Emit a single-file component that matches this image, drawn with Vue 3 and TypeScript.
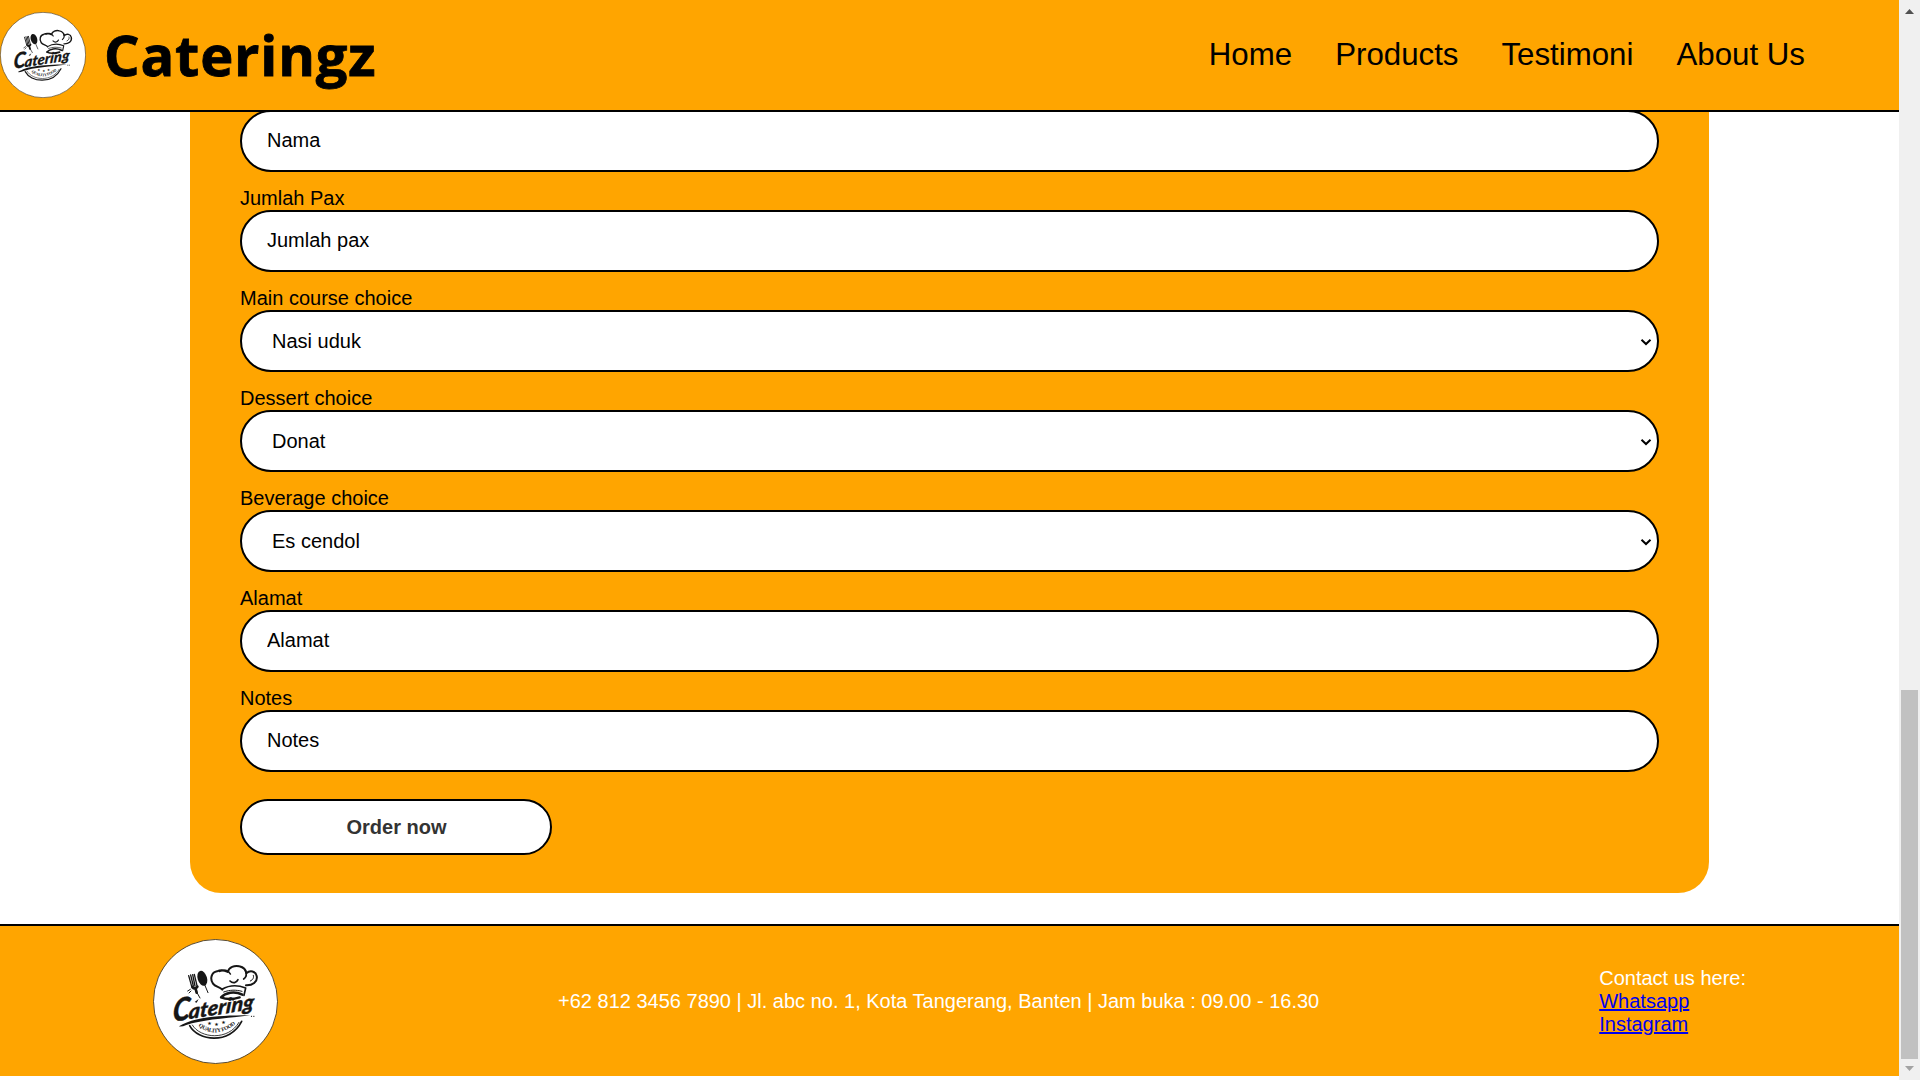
<script setup lang="ts">
interface Field {
  label: string
  kind: 'text' | 'select'
  value: string
}

const links: string[] = ['Home', 'Products', 'Testimoni', 'About Us']

const fields: Field[] = [
  { label: '', kind: 'text', value: 'Nama' },
  { label: 'Jumlah Pax', kind: 'text', value: 'Jumlah pax' },
  { label: 'Main course choice', kind: 'select', value: 'Nasi uduk' },
  { label: 'Dessert choice', kind: 'select', value: 'Donat' },
  { label: 'Beverage choice', kind: 'select', value: 'Es cendol' },
  { label: 'Alamat', kind: 'text', value: 'Alamat' },
  { label: 'Notes', kind: 'text', value: 'Notes' },
]
</script>

<template>
  <div class="window">
    <div class="page">
      <header class="header">
        <svg class="logo" viewBox="39 87 375 375">
          <symbol id="badge" viewBox="39 87 375 375">
            <circle cx="226.500" cy="274.500" r="186" fill="#fff" stroke="#3a3020" stroke-width="2.500" />
            <g fill="none" stroke="#161616" stroke-linecap="round" stroke-linejoin="round">
              <path stroke-width="6" d="M247 239C238 230 226 231 219 221C209 207 214 187 231 184C242 179 254 181 263 186C267 172 283 165 298 169C311 172 318 181 319 190C330 180 347 183 350 198C354 216 337 227 318 226" />
              <path stroke-width="5" d="M246 238C266 226 292 224 317 234L312 256M239 184C252 178 265 180 271 192M316 181C321 192 318 202 311 207M270 213C279 222 290 218 294 209" />
              <path stroke-width="7" d="M307 254C283 242 256 248 243 262C262 270 286 266 299 262" />
              <path stroke-width="3" d="M251 246C271 239 287 239 306 244M331 213C340 209 342 202 340 196" />
              <path stroke-width="4" d="M146 197L155 229M152 195L160 228M158 194L165 228M163 193L171 227" />
              <path stroke-width="8" d="M157 231Q165 240 172 230M167 237L170 248" />
              <path stroke-width="3" d="M171 248L180 264M193 222L204 248M143 243L151 238M147 249L153 243" />
              <path stroke-width="5" d="M149 347C173 393 269 405 305 334" />
              <path stroke-width="2.500" d="M157 345C181 386 265 393 297 337" />
              <path stroke-width="3" d="M334 319H335M341 319H342" />
            </g>
            <ellipse cx="187" cy="205" rx="14" ry="23" transform="rotate(-17 187 205)" fill="#161616" />
            <path d="M117 349C155 325 215 316 331 316C260 325 184 329 139 345Q125 351 117 349Z" fill="#161616" />
            <path d="M164 276L176 267L170 278ZM265 267L287 265L280 272Z" fill="#161616" />
            <text class="script" font-size="94" textLength="52" lengthAdjust="spacingAndGlyphs" transform="translate(97 335) rotate(-8) skewX(-12)">C</text>
            <text class="script" font-size="62" textLength="198" lengthAdjust="spacingAndGlyphs" transform="translate(145 328) rotate(-9) skewX(-14)">atering</text>
            <path id="badge-arc" d="M175 348Q228 389 287 342" fill="none" />
            <text class="tagline"><textPath href="#badge-arc" textLength="122">QUALITY FOOD</textPath></text>
            <g class="stars"><text x="202" y="346">★</text><text x="223" y="349">★</text><text x="244" y="343">★</text></g>
          </symbol>
          <use href="#badge" x="39" y="87" width="375" height="375" />
        </svg>
        <h1 class="brand">Cateringz</h1>
        <nav class="nav">
          <a v-for="link in links" :key="link" class="nav-link">{{ link }}</a>
        </nav>
      </header>

      <main class="main">
        <form class="card">
          <div v-for="field in fields" :key="field.value" class="field">
            <label v-if="field.label" class="label">{{ field.label }}</label>
            <input v-if="field.kind === 'text'" class="control" type="text" :placeholder="field.value" />
            <div v-else class="select-wrap">
              <select class="control select">
                <option>{{ field.value }}</option>
              </select>
              <svg class="chevron" viewBox="0 0 12 8"><path d="M1.500 1.700L6 6L10.500 1.700" /></svg>
            </div>
          </div>
          <button class="order" type="button">Order now</button>
        </form>
      </main>

      <footer class="footer">
        <svg class="footer-logo" viewBox="39 87 375 375">
          <use href="#badge" x="39" y="87" width="375" height="375" />
        </svg>
        <p class="info">+62 812 3456 7890 | Jl. abc no. 1, Kota Tangerang, Banten | Jam buka : 09.00 - 16.30</p>
        <div class="contact">
          <span>Contact us here:</span>
          <a href="#">Whatsapp</a>
          <a href="#">Instagram</a>
        </div>
      </footer>
    </div>

    <div class="scrollbar">
      <svg class="arrow" viewBox="0 0 21 21"><path d="M6 14L10.500 9L15 14Z" fill="#505050" /></svg>
      <div class="thumb"></div>
      <svg class="arrow" viewBox="0 0 21 21"><path d="M6 7L10.500 12L15 7Z" fill="#a3a3a3" /></svg>
    </div>
  </div>
</template>

<style>
html,
body {
  margin: 0;
  overflow: hidden;
}
</style>

<style scoped>
* {
  box-sizing: border-box;
}

.window {
  display: flex;
  width: 1920px;
  height: 1080px;
  background: #fff;
  color: #000;
  font: 20px/23px 'Liberation Sans', Arial, sans-serif;
}

.page {
  display: flex;
  flex-direction: column;
  width: 1899px;
  height: 1080px;
}

.header {
  position: relative;
  z-index: 1;
  display: flex;
  flex: none;
  align-items: center;
  height: 112px;
  padding-right: 94px;
  background: orange;
  border-bottom: 2px solid #000;
}

.logo {
  width: 86px;
  height: 86px;
}

.script {
  fill: #161616;
  stroke: #161616;
  stroke-width: 1px;
  font-family: Lato, sans-serif;
  font-weight: 900;
  font-style: italic;
}

.tagline {
  fill: #161616;
  font: bold 17px 'Liberation Serif', serif;
}

.stars {
  fill: #161616;
  font: 15px 'DejaVu Sans', sans-serif;
}

.brand {
  margin: 0 0 3px 18px;
  font: 700 56px/76px 'Open Sans', sans-serif;
  letter-spacing: 0.8px;
  -webkit-text-stroke: 0.8px #000;
}

.nav {
  display: flex;
  gap: 43px;
  margin-left: auto;
}

.nav-link {
  font-size: 31.25px;
  line-height: 36px;
}

.main {
  flex: none;
  height: 812px;
}

.card {
  width: 1519px;
  height: 783px;
  margin: -2px auto 0;
  padding: 0 50px;
  background: orange;
  border-radius: 0 0 31px 31px;
}

.field {
  display: flex;
  flex-direction: column;
  margin-bottom: 15px;
}

.label {
  height: 23px;
}

.control {
  display: block;
  width: 100%;
  height: 62px;
  margin: 0;
  padding: 14px 25px 16px;
  background: #fff;
  color: #000;
  border: 2px solid #000;
  border-radius: 31px;
  font: 20px 'Liberation Sans', Arial, sans-serif;
}

.control::placeholder {
  color: #000;
  opacity: 1;
}

.select-wrap {
  position: relative;
}

.select {
  appearance: none;
  padding: 15px 0 15px 30px;
}

.chevron {
  position: absolute;
  top: 28px;
  right: 7px;
  width: 12px;
  height: 8px;
  fill: none;
  stroke: #000;
  stroke-width: 2px;
}

.order {
  display: block;
  width: 312px;
  height: 56px;
  margin-top: 27px;
  padding: 0 0 0 1px;
  background: #fff;
  color: #333;
  border: 2px solid #000;
  border-radius: 30px;
  font: bold 20px 'Liberation Sans', Arial, sans-serif;
}

.footer {
  display: flex;
  flex: none;
  align-items: center;
  justify-content: space-between;
  height: 152px;
  padding: 0 153px;
  background: orange;
  border-top: 2px solid #000;
  color: #fff;
}

.footer-logo {
  width: 125px;
  height: 125px;
}

.info {
  margin: 0;
}

.contact {
  display: flex;
  flex-direction: column;
  align-items: flex-start;
}

.contact a {
  color: #00e;
  text-decoration: underline;
}

.scrollbar {
  display: flex;
  flex-direction: column;
  width: 21px;
  height: 1080px;
  background: #f0f0f0;
}

.arrow {
  flex: none;
  width: 21px;
  height: 21px;
}

.thumb {
  width: 17px;
  height: 369px;
  margin: auto 2px 0;
  background: #c1c1c1;
}
</style>
